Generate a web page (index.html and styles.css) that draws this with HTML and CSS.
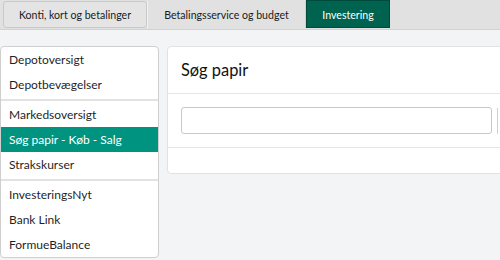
FILE: index.html
```html
<!DOCTYPE html>
<html lang="da">
<head>
<meta charset="utf-8">
<link rel="stylesheet" href="styles.css">
</head>
<body>
<div class="tabbar">
  <div class="tab tab-first">Konti, kort og betalinger</div>
  <div class="tab tab-second">Betalingsservice og budget</div>
  <div class="tab tab-active">Investering</div>
</div>
<div class="content">
  <nav class="sidebar">
    <div class="group">
      <div class="item">Depotoversigt</div>
      <div class="item">Depotbevægelser</div>
    </div>
    <div class="group">
      <div class="item">Markedsoversigt</div>
      <div class="item selected">Søg papir - Køb - Salg</div>
      <div class="item">Strakskurser</div>
    </div>
    <div class="group">
      <div class="item">InvesteringsNyt</div>
      <div class="item">Bank Link</div>
      <div class="item">FormueBalance</div>
    </div>
  </nav>
  <main class="panel">
    <div class="panel-head">Søg papir</div>
    <div class="panel-body">
      <input class="search" type="text">
      <span class="cut"></span>
    </div>
    <div class="panel-foot"></div>
  </main>
</div>
</body>
</html>
```
FILE: styles.css
```css
* { box-sizing: border-box; }
html, body { margin: 0; padding: 0; }
body {
  background: #f3f4f5;
  font-family: Lato, "Open Sans", sans-serif;
  color: #1a1a1a;
  width: 500px;
  height: 260px;
  overflow: hidden;
}
.tabbar {
  display: flex;
  height: 30px;
  background: #e1e1e1;
  border-bottom: 1px solid #d2d2d2;
  padding: 1px 0 1px 3px;
}
.tab {
  display: flex;
  align-items: center;
  justify-content: center;
  font-size: 10.6px;
  color: #1a1a1a;
  padding-top: 1px;
}
.tab-first {
  width: 144px;
  border: 1px solid #c9c9c9;
  border-radius: 3px;
  background: #e4e4e4;
}
.tab-second {
  width: 159px;
  border-left: 1px solid #f2f2f2;
  border-right: 1px solid #cfcfcf;
}
.tab-active {
  width: 84px;
  margin-top: -1px;
  height: 28px;
  background: #006350;
  border: 1px solid #004a3c;
  color: #fff;
}
.content {
  display: flex;
  align-items: flex-start;
  gap: 8px;
  padding: 16px 0 0 0;
}
.sidebar {
  width: 159px;
  flex: none;
  background: #fff;
  border: 1px solid #cfcfcf;
  border-radius: 4px;
  overflow: hidden;
}
.group + .group {
  border-top: 2px solid #e2e2e2;
  margin-top: 2px;
  padding-top: 1px;
}
.item {
  height: 25px;
  display: flex;
  align-items: center;
  padding-left: 8px;
  font-size: 12px;
  color: #1f1f1f;
}
.item.selected {
  background: #009480;
  color: #fff;
}
.panel {
  flex: 1;
  min-width: 0;
  margin-right: -20px;
  background: #fff;
  border: 1px solid #e2e2e2;
  border-radius: 4px;
}
.panel-head {
  height: 47px;
  display: flex;
  align-items: center;
  padding-left: 13px;
  padding-bottom: 1px;
  font-size: 16.4px;
  color: #111;
  border-bottom: 1px solid #e6e6e6;
}
.panel-body {
  display: flex;
  align-items: center;
  gap: 5px;
  height: 54px;
  padding-left: 13px;
  border-bottom: 1px solid #e6e6e6;
}
.search {
  width: 311px;
  height: 27px;
  border: 1px solid #c8c8c8;
  border-radius: 3px;
  background: #fff;
  margin: 0;
}
.cut {
  width: 2px;
  height: 26px;
  border-left: 1px solid #d0d0d0;
}
.panel-foot {
  height: 25px;
}
```
